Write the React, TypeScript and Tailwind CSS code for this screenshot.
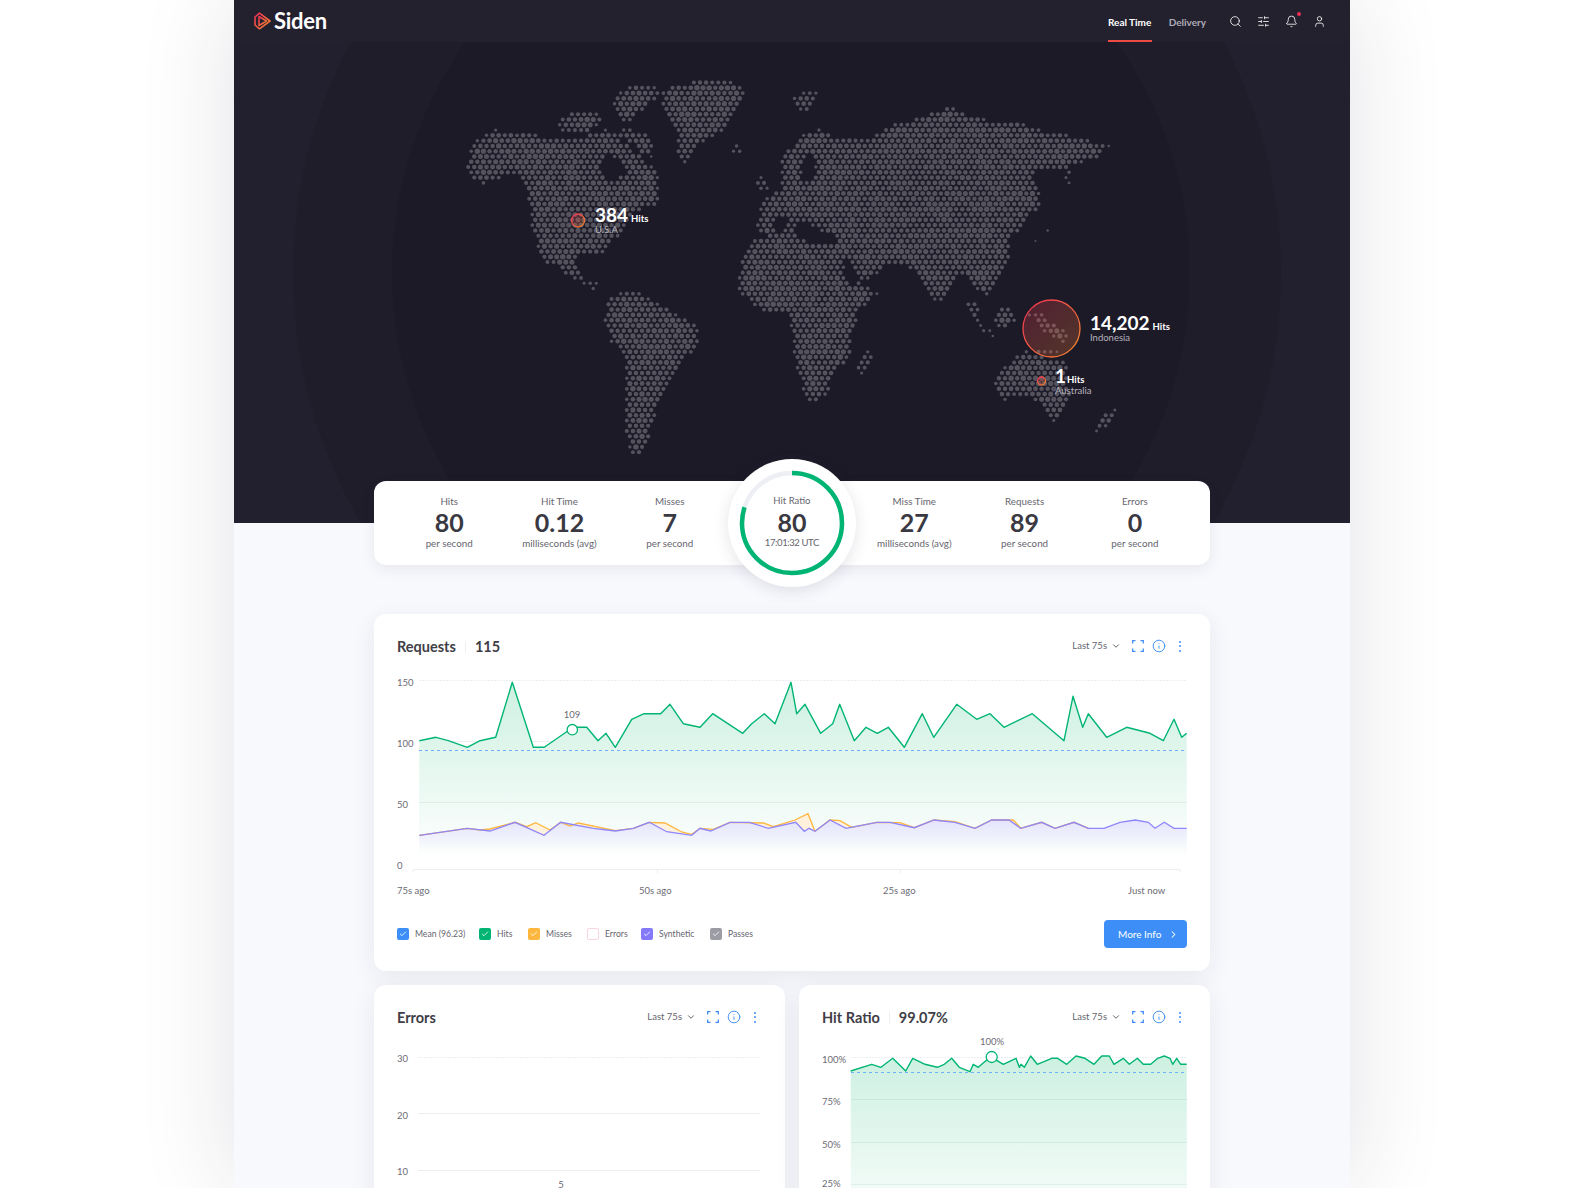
import { Bell, Check, ChevronDown, ChevronRight, Info, Search, SlidersHorizontal, User } from 'lucide-react';

type Pt = number[];

// outlines were read off zoomed crops, so each list keeps its own origin
const z = (ox: number, oy: number, pts: Pt[]) => pts.map(([x, y]) => [x / 3 + ox, y / 3 + oy]);
const z11 = (pts: Pt[]) => z(460, 70, pts);
const z12 = (pts: Pt[]) => z(720, 90, pts);
const z3 = (pts: Pt[]) => z(980, 280, pts);
const s = (pts: Pt[]) => pts.map(([x, y]) => [x * 1.0102, y * 1.0102]);

const land: Pt[][] = [
  // north america
  z11([[15, 285], [45, 215], [100, 178], [170, 195], [230, 195], [285, 200], [340, 205], [420, 190], [440, 175], [490, 200], [480, 225], [510, 225], [525, 250], [555, 265], [590, 310], [600, 370], [615, 395], [570, 410], [530, 430], [490, 490], [440, 530], [430, 550], [350, 560], [345, 590], [370, 620], [420, 640], [400, 662], [330, 625], [300, 590], [260, 578], [235, 530], [212, 470], [205, 380], [195, 330], [150, 305], [100, 335], [60, 340], [35, 325], [15, 305]]),
  // arctic islands
  z11([[280, 155], [320, 135], [375, 125], [420, 135], [420, 165], [380, 190], [330, 190], [285, 170]]),
  z11([[460, 80], [520, 45], [590, 50], [595, 80], [560, 110], [525, 140], [490, 165], [460, 120]]),
  z11([[480, 170], [550, 185], [590, 225], [570, 268], [540, 240], [505, 215], [470, 190]]),
  // greenland
  z11([[610, 60], [720, 30], [800, 25], [862, 65], [825, 130], [780, 190], [705, 235], [685, 288], [650, 270], [650, 200], [610, 125]]),
  z11([[812, 232], [838, 222], [862, 240], [838, 255]]),
  z11([[440, 690], [480, 660], [540, 680], [590, 710], [560, 720], [450, 720]]),
  // south america
  s([[601, 298], [620, 288], [640, 292], [660, 305], [692, 325], [690, 340], [672, 365], [660, 380], [650, 405], [642, 430], [638, 450], [625, 448], [618, 425], [620, 385], [620, 360], [603, 335], [598, 315]]),
  // africa
  z12([[50, 570], [70, 510], [100, 450], [170, 430], [215, 440], [300, 460], [360, 470], [380, 520], [410, 570], [450, 590], [475, 610], [420, 660], [400, 710], [390, 790], [340, 860], [320, 910], [280, 938], [255, 925], [240, 870], [220, 800], [215, 720], [205, 660], [130, 660], [90, 640], [55, 600]]),
  // eurasia
  z12([[105, 390], [130, 345], [130, 320], [185, 300], [180, 220], [240, 130], [300, 115], [350, 150], [430, 150], [500, 110], [580, 88], [620, 72], [690, 52], [760, 84], [880, 96], [980, 122], [1100, 150], [1172, 165], [1130, 200], [1040, 230], [1065, 285], [1035, 292], [1028, 235], [960, 240], [935, 250], [962, 290], [962, 340], [920, 395], [890, 430], [862, 420], [875, 480], [850, 540], [810, 620], [770, 600], [750, 570], [710, 550], [655, 640], [625, 625], [590, 545], [540, 520], [510, 520], [460, 560], [420, 590], [380, 510], [360, 470], [210, 440], [110, 430]]),
  z12([[102, 280], [130, 245], [150, 285], [135, 310]]),
  z12([[30, 178], [55, 160], [85, 178], [55, 195]]),
  z12([[200, 18], [260, 5], [305, 10], [250, 68]]),
  // islands of south east asia
  z12([[740, 640], [765, 635], [790, 700], [830, 745], [810, 740], [760, 695]]),
  z12([[810, 690], [850, 640], [890, 680], [855, 720], [825, 710]]),
  z12([[925, 672], [960, 670], [1045, 730], [1030, 755], [985, 740]]),
  z12([[945, 770], [980, 770], [1030, 785], [960, 795]]),
  z12([[925, 458], [985, 418], [985, 430], [935, 460]]),
  // madagascar
  z12([[405, 860], [418, 800], [450, 765], [460, 815], [432, 868]]),
  // australia
  z3([[45, 300], [80, 255], [130, 212], [210, 238], [272, 250], [262, 300], [272, 350], [240, 400], [228, 428], [200, 410], [180, 372], [130, 345], [70, 362], [50, 335]]),
  z3([[345, 455], [365, 415], [410, 365], [412, 405], [370, 445]]),
  z3([[0, 10], [30, 10], [28, 52], [5, 50]]),
  z3([[35, 118], [70, 72], [108, 118], [72, 150]]),
];

const water: Pt[][] = [
  z11([[420, 265], [455, 255], [495, 285], [495, 315], [455, 330], [422, 305]]),
  z12([[160, 390], [200, 385], [205, 420], [165, 425]]),
  z12([[225, 410], [260, 400], [300, 425], [362, 440], [360, 462], [300, 462], [240, 450]]),
  z12([[255, 190], [290, 210], [272, 270], [238, 272], [250, 220]]),
  z12([[380, 535], [410, 575], [400, 585], [372, 548]]),
];

const extra: Pt[] = [
  ...z11([[432, 590, 2.6], [468, 590, 1.4], [505, 612, 2.6], [523, 622, 1.6], [486, 622, 1.6], [395, 612, 3], [615, 398, 3], [42, 368, 2.4], [22, 378, 2], [8, 385, 1]]),
  ...z12([[890, 562, 3], [927, 605, 2.8], [910, 592, 1], [650, 637, 2.2], [630, 625, 2]]),
  ...z12([[445, 100, 1.4], [462, 88, 2.2], [482, 72, 2.4], [502, 60, 2.6], [612, 18, 2], [632, 28, 2.6], [650, 18, 1.2], [872, 60, 2.6], [890, 72, 2.6]]),
];

const inside = (x: number, y: number, poly: Pt[]) => {
  let hit = false;
  for (let i = 0, j = poly.length - 1; i < poly.length; j = i++) {
    const [xi, yi] = poly[i];
    const [xj, yj] = poly[j];
    if (yi > y !== yj > y && x < ((xj - xi) * (y - yi)) / (yj - yi) + xi) hit = !hit;
  }
  return hit;
};

const onLand = (x: number, y: number) => land.some((p) => inside(x, y, p)) && !water.some((p) => inside(x, y, p));

const makeDots = () => {
  const dots: Pt[] = [];
  const dx = 6.1;
  const dy = 5.28;
  for (let row = 0; row < 76; row++) {
    const y = 72 + row * dy;
    for (let col = 0; col < 112; col++) {
      const x = 456 + col * dx + (row % 2 ? dx / 2 : 0);
      if (!onLand(x, y)) continue;
      const near = [[dx, 0], [-dx, 0], [dx / 2, dy], [-dx / 2, dy], [dx / 2, -dy], [-dx / 2, -dy]].filter(([a, b]) => onLand(x + a, y + b)).length;
      const noise = Math.abs(Math.sin(x * 12.9898 + y * 78.233) * 43758.5453) % 1;
      dots.push([x, y, near === 6 ? 2.2 + noise * 0.55 : 1 + (near / 6) * 1.4 + noise * 0.4]);
    }
  }
  return [...dots, ...extra];
};

const dots = makeDots();

const line = (pts: Pt[]) => pts.map(([x, y]) => `${x.toFixed(1)},${y.toFixed(1)}`).join(' ');
const z5 = (pts: Pt[]) => z(380, 620, pts);
const z6 = (pts: Pt[]) => z(780, 620, pts);
const z10 = (pts: Pt[]) => z(790, 980, pts);

const hits = [
  ...z5([[118, 362], [168, 352], [205, 362], [262, 382], [300, 362], [347, 352], [397, 187], [460, 382], [493, 382], [560, 335], [577, 329], [590, 322], [620, 322], [654, 362], [678, 340], [706, 382], [755, 298], [792, 281], [842, 281], [870, 253], [910, 311], [960, 322], [998, 281], [1088, 340], [1115, 311], [1153, 281], [1185, 311]]),
  ...z6([[33, 187], [50, 281], [75, 253], [122, 340], [158, 311], [179, 253], [223, 362], [258, 322], [292, 340], [325, 322], [373, 382], [427, 281], [461, 352], [530, 253], [590, 298], [630, 281], [672, 322], [757, 281], [852, 362], [879, 229], [908, 322], [925, 281], [980, 352], [1040, 322], [1110, 340], [1150, 362], [1182, 298], [1205, 352], [1220, 340]]),
];
const synthetic = [
  ...z5([[118, 646], [262, 625], [330, 633], [405, 607], [492, 646], [542, 607], [640, 625], [706, 633], [760, 625], [808, 607], [860, 635], [935, 646], [960, 625], [992, 633], [1050, 607], [1108, 607], [1165, 625]]),
  ...z6([[47, 607], [73, 634], [87, 625], [105, 634], [150, 600], [198, 625], [290, 607], [330, 607], [403, 623], [462, 600], [525, 607], [585, 625], [635, 600], [687, 600], [722, 625], [785, 607], [825, 625], [882, 607], [925, 625], [972, 625], [1020, 607], [1066, 600], [1105, 607], [1125, 625], [1153, 607], [1182, 625], [1220, 625]]),
];
const misses = [
  ...z5([[118, 646], [262, 625], [300, 630], [330, 627], [405, 607], [440, 620], [467, 608], [510, 630], [542, 607], [570, 618], [595, 609], [706, 632], [760, 625], [808, 607], [855, 609], [905, 636], [935, 643], [960, 625], [1000, 628], [1050, 607], [1150, 609], [1180, 620]]),
  ...z6([[45, 600], [84, 581], [105, 634], [150, 600], [180, 602], [215, 622], [290, 607], [360, 608], [403, 623], [462, 600], [525, 605], [585, 625], [635, 600], [700, 600], [722, 625], [785, 607], [825, 625], [882, 607], [925, 625]]),
];
const missBand = [...misses, ...synthetic.filter(([x]) => x <= 1088.4).reverse()];
const ratio = z10([[182, 273], [245, 253], [273, 262], [308, 235], [347, 273], [368, 235], [405, 253], [442, 262], [463, 253], [485, 235], [508, 262], [540, 275], [550, 253], [565, 262], [590, 240], [605, 232], [640, 253], [678, 235], [688, 262], [693, 253], [703, 262], [722, 228], [742, 253], [785, 235], [803, 235], [830, 253], [858, 228], [885, 235], [912, 253], [935, 228], [958, 228], [972, 253], [1000, 235], [1018, 253], [1042, 235], [1060, 253], [1082, 253], [1103, 235], [1123, 228], [1140, 235], [1148, 253], [1160, 235], [1172, 253], [1190, 253]]);

const stats = [
  { label: 'Hits', value: '80', sub: 'per second' },
  { label: 'Hit Time', value: '0.12', sub: 'milliseconds (avg)' },
  { label: 'Misses', value: '7', sub: 'per second' },
];
const stats2 = [
  { label: 'Miss Time', value: '27', sub: 'milliseconds (avg)' },
  { label: 'Requests', value: '89', sub: 'per second' },
  { label: 'Errors', value: '0', sub: 'per second' },
];

const legend = [
  { name: 'Mean (96.23)', box: 'bg-[#3d8ff7]', w: 'w-[82px]' },
  { name: 'Hits', box: 'bg-[#00b574]', w: 'w-[49px]' },
  { name: 'Misses', box: 'bg-[#fdb73e]', w: 'w-[59px]' },
  { name: 'Errors', box: 'bg-white border border-[#fbd5de]', w: 'w-[54px]' },
  { name: 'Synthetic', box: 'bg-[#8479fb]', w: 'w-[69px]' },
  { name: 'Passes', box: 'bg-[#9c9ca4]', w: 'w-[60px]' },
];

const Stat = ({ label, value, sub }: { label: string; value: string; sub: string }) => (
  <div className="flex w-[110.5px] flex-col items-center pb-[3px]">
    <span className="text-[9.8px] leading-[14px] text-[#66656e]">{label}</span>
    <span className="text-[25px] font-bold leading-[28px] text-[#3a3942]">{value}</span>
    <span className="text-[9.8px] leading-[14px] text-[#66656e]">{sub}</span>
  </div>
);

const Expand = () => (
  <svg width="12" height="12" viewBox="0 0 12 12" fill="none" stroke="#3d8ff7" strokeWidth="1.3">
    <path d="M.7 3.5V.7h2.8M8.5.7h2.8v2.8M11.3 8.5v2.8H8.5M3.5 11.3H.7V8.5" />
  </svg>
);

const Controls = () => (
  <div className="flex items-center text-[9.5px] text-[#66656e]">
    <span>Last 75s</span>
    <ChevronDown size={10} strokeWidth={2} className="ml-[4px] text-[#44434c]" />
    <span className="ml-[11px]"><Expand /></span>
    <Info size={14} strokeWidth={1.6} className="ml-[8px] text-[#3d8ff7]" />
    <div className="ml-[13px] mr-[6px] flex flex-col gap-[2.5px]">
      <span className="h-[2px] w-[2px] rounded-full bg-[#3d8ff7]" />
      <span className="h-[2px] w-[2px] rounded-full bg-[#3d8ff7]" />
      <span className="h-[2px] w-[2px] rounded-full bg-[#3d8ff7]" />
    </div>
  </div>
);

const CardHeader = ({ title, value }: { title: string; value?: string }) => (
  <div className="flex h-[20px] items-center justify-between">
    <div className="mt-[2px] flex items-center text-[14.5px] font-bold leading-[20px] text-[#3f3e47]">
      <span>{title}</span>
      {value && <span className="mx-[9px] h-[12px] w-px bg-[#eeeff3]" />}
      {value && <span className="-mt-[1px]">{value}</span>}
    </div>
    <Controls />
  </div>
);

const Pin = ({ x, y, r, id }: { x: number; y: number; r: number; id: string }) => (
  <>
    <defs>
      <linearGradient id={id} x1="0" y1="0" x2="1" y2="1">
        <stop offset="0" stopColor="#ee2f55" />
        <stop offset="1" stopColor="#f58a2c" />
      </linearGradient>
    </defs>
    <circle cx={x} cy={y} r={r} fill={`url(#${id})`} fillOpacity="0.25" stroke={`url(#${id})`} strokeWidth="1.3" />
  </>
);

const MapLabel = ({ pos, value, gap, name }: { pos: string; value: string; gap: string; name: string }) => (
  <div className={`absolute ${pos} flex flex-col text-white`}>
    <div className={`flex items-baseline ${gap} leading-[11px]`}>
      <span className="text-[19px] font-bold">{value}</span>
      <span className="text-[9.5px] font-bold">Hits</span>
    </div>
    <span className="text-[9.5px] leading-[11px] text-[#b5b3bc]">{name}</span>
  </div>
);

const grid = 'stroke-[#eceef1]';
const axis = 'fill-[#6c6b74] text-[9.5px]';

export default function App() {
  return (
    <div className="h-[1188px] overflow-hidden bg-white font-['Lato',sans-serif]">
      <div className="mx-auto h-[1188px] w-[1116px] bg-[#f8f9fd] shadow-[0_0_90px_rgba(30,30,60,0.13)]">
        <header className="relative z-10 flex h-[42px] items-center bg-[#24212f] pl-[20px] pr-[24px]">
          <svg width="17" height="18" viewBox="0 0 17 18" fill="none" stroke="url(#logo)" strokeWidth="1.6" strokeLinejoin="round">
            <defs>
              <linearGradient id="logo" x1="0" y1="0" x2="1" y2="1">
                <stop offset="0" stopColor="#ee2f55" />
                <stop offset="1" stopColor="#f58a2c" />
              </linearGradient>
            </defs>
            <path d="M1 5 5.5 1.2 16 9 5.5 16.8 1 13Z" />
            <path d="M5 4.5 12.5 9 5 13.5Z" />
          </svg>
          <span className="-mt-[1px] ml-[3px] text-[22px] font-bold leading-none tracking-[-0.3px] text-white">Siden</span>
          <nav className="ml-auto flex h-full items-center text-[10px] font-bold">
            <span className="flex h-full w-[44px] items-center justify-center whitespace-nowrap border-b-[2.5px] border-[#ee4a45] pt-[4px] text-white">Real Time</span>
            <span className="ml-[17px] mt-[2px] text-[#aeacb6]">Delivery</span>
          </nav>
          <div className="ml-[23px] flex items-center gap-[15px] text-white">
            <Search size={13} strokeWidth={1.5} />
            <SlidersHorizontal size={13} strokeWidth={1.5} />
            <span className="relative">
              <Bell size={13} strokeWidth={1.5} />
              <span className="absolute right-[-3px] top-[-3px] h-[4px] w-[4px] rounded-full bg-[#ee2f55]" />
            </span>
            <User size={13} strokeWidth={1.5} />
          </div>
        </header>

        <section className="relative h-[481px] overflow-hidden bg-[#22202e]">
          <div className="absolute left-[59px] top-[-263px] h-[988px] w-[988px] rounded-full bg-[#201d2b]" />
          <div className="absolute left-[158px] top-[-168px] h-[798px] w-[798px] rounded-full bg-[#1d1a28]" />
          <svg className="absolute inset-0" width="1116" height="481" viewBox="234 42 1116 481">
            {dots.map(([x, y, r], i) => (
              <circle key={i} cx={x} cy={y} r={r} fill="#55535e" />
            ))}
            <Pin id="pin-a" x={578} y={220.5} r={6.5} />
            <Pin id="pin-b" x={1051.5} y={328.5} r={28.5} />
            <Pin id="pin-c" x={1041.5} y={381} r={4} />
          </svg>
          <MapLabel pos="left-[361px] top-[167px]" value="384" gap="gap-[3px]" name="U.S.A" />
          <MapLabel pos="left-[856px] top-[275px]" value="14,202" gap="gap-[3px]" name="Indonesia" />
          <MapLabel pos="left-[821px] top-[328px]" value="1" gap="gap-[1px]" name="Australia" />
        </section>

        <main className="relative px-[140px]">
          <div className="relative z-10 -mt-[42px] flex h-[84px] items-center rounded-[12px] bg-white px-[20px] shadow-[0_4px_14px_rgba(40,40,70,0.08)]">
            {stats.map((item) => (
              <Stat key={item.label} {...item} />
            ))}
            <div className="relative h-full w-[134.5px]">
              <div className="absolute left-[3px] top-[-22px] flex h-[128px] w-[128px] flex-col items-center justify-center rounded-full bg-white pb-[2px] shadow-[0_4px_16px_rgba(40,40,70,0.12)]">
                <svg className="absolute inset-0" width="128" height="128" viewBox="0 0 128 128">
                  <circle cx="64" cy="64" r="50" fill="none" stroke="#edeff4" strokeWidth="4.5" />
                  <circle cx="64" cy="64" r="50" fill="none" stroke="#00b574" strokeWidth="4.5" strokeDasharray="251.3 314.2" transform="rotate(-90 64 64)" />
                </svg>
                <span className="text-[9.5px] leading-[14px] text-[#66656e]">Hit Ratio</span>
                <span className="text-[25px] font-bold leading-[28px] text-[#3a3942]">80</span>
                <span className="text-[9.5px] leading-[14px] tracking-[-0.4px] text-[#66656e]">17:01:32 UTC</span>
              </div>
            </div>
            {stats2.map((item) => (
              <Stat key={item.label} {...item} />
            ))}
          </div>

          <div className="mt-[49px] h-[357px] rounded-[12px] bg-white px-[23px] pt-[22px] shadow-[0_6px_24px_rgba(40,40,70,0.08)]">
            <CardHeader title="Requests" value="115" />
            <svg className="mt-[16px] block" width="790" height="230" viewBox="397 672 790 230">
              <defs>
                <linearGradient id="g-green" x1="0" y1="680" x2="0" y2="862" gradientUnits="userSpaceOnUse">
                  <stop offset="0" stopColor="#cdf0e1" />
                  <stop offset="1" stopColor="#ffffff" />
                </linearGradient>
                <linearGradient id="g-purple" x1="0" y1="815" x2="0" y2="852" gradientUnits="userSpaceOnUse">
                  <stop offset="0" stopColor="#e3e0fd" />
                  <stop offset="1" stopColor="#e3e0fd" stopOpacity="0" />
                </linearGradient>
              </defs>
              <line x1="419" x2="1187" y1="680.5" y2="680.5" className={grid} strokeDasharray="2 1" />
              <line x1="419" x2="1187" y1="741.5" y2="741.5" className={grid} />
              <path d="M413 872v-2.5h767v2.5M657.5 869.5v4M900.5 869.5v4" fill="none" className={grid} />
              <polygon points={`419,862 ${line(hits)} 1187,862`} fill="url(#g-green)" />
              <line x1="419" x2="1187" y1="802.5" y2="802.5" stroke="#dfeee8" />
              <polygon points={line(missBand)} fill="#fff1dc" />
              <polygon points={`419,852 ${line(synthetic)} 1187,852`} fill="url(#g-purple)" />
              <polyline points={line(misses)} fill="none" stroke="#fdb73e" strokeWidth="1.3" />
              <polyline points={line(synthetic)} fill="none" stroke="#8f86fb" strokeWidth="1.3" />
              <polyline points={line(hits)} fill="none" stroke="#00b574" strokeWidth="1.4" strokeLinejoin="round" />
              <line x1="419" x2="1187" y1="750.5" y2="750.5" stroke="#6fb2fb" strokeDasharray="3 3" />
              <circle cx="572.3" cy="729.7" r="5.2" fill="#fff" stroke="#00b574" strokeWidth="1.3" />
              <text x="572" y="718" textAnchor="middle" className={axis}>109</text>
              <text x="397" y="686" className={axis}>150</text>
              <text x="397" y="747" className={axis}>100</text>
              <text x="397" y="808" className={axis}>50</text>
              <text x="397" y="869" className={axis}>0</text>
              <text x="397" y="894" className={axis}>75s ago</text>
              <text x="639" y="894" className={axis}>50s ago</text>
              <text x="883" y="894" className={axis}>25s ago</text>
              <text x="1128" y="894" className={axis}>Just now</text>
            </svg>
            <div className="mt-[18px] flex items-center">
              {legend.map((item) => (
                <div key={item.name} className={`flex ${item.w} items-center`}>
                  <span className={`flex h-[12px] w-[12px] items-center justify-center rounded-[2px] ${item.box}`}>
                    <Check size={8} strokeWidth={2.5} className="text-white" />
                  </span>
                  <span className="ml-[6px] whitespace-nowrap text-[8.6px] text-[#66656e]">{item.name}</span>
                </div>
              ))}
              <button className="ml-auto flex h-[28px] w-[83px] items-center rounded-[4px] bg-[#3d8ff7] pl-[14px] text-[10px] text-white">
                More Info
                <ChevronRight size={11} strokeWidth={2.2} className="ml-[7px]" />
              </button>
            </div>
          </div>

          <div className="mt-[14px] flex gap-[14px]">
            <div className="h-[300px] w-[411px] rounded-[12px] bg-white px-[23px] pt-[22px] shadow-[0_6px_24px_rgba(40,40,70,0.08)]">
              <CardHeader title="Errors" />
              <svg className="mt-[3px] block" width="365" height="170" viewBox="397 1030 365 170">
                <line x1="418" x2="760" y1="1057.5" y2="1057.5" className={grid} strokeDasharray="2 1" />
                <line x1="418" x2="760" y1="1113.5" y2="1113.5" className={grid} />
                <line x1="418" x2="760" y1="1170.5" y2="1170.5" className={grid} />
                <text x="397" y="1062" className={axis}>30</text>
                <text x="397" y="1119" className={axis}>20</text>
                <text x="397" y="1175" className={axis}>10</text>
                <text x="561" y="1188" textAnchor="middle" className={axis}>5</text>
              </svg>
            </div>
            <div className="h-[300px] w-[411px] rounded-[12px] bg-white px-[23px] pt-[22px] shadow-[0_6px_24px_rgba(40,40,70,0.08)]">
              <CardHeader title="Hit Ratio" value="99.07%" />
              <svg className="mt-[3px] block" width="365" height="170" viewBox="822 1030 365 170">
                <defs>
                  <linearGradient id="g-ratio" x1="0" y1="1057" x2="0" y2="1240" gradientUnits="userSpaceOnUse">
                    <stop offset="0" stopColor="#cdf0e1" />
                    <stop offset="1" stopColor="#ffffff" />
                  </linearGradient>
                </defs>
                <line x1="851" x2="1187" y1="1057.5" y2="1057.5" className={grid} strokeDasharray="2 1" />
                <polygon points={`851,1240 ${line(ratio)} 1187,1240`} fill="url(#g-ratio)" />
                <line x1="851" x2="1187" y1="1099.5" y2="1099.5" stroke="#b9dccd" strokeOpacity="0.5" />
                <line x1="851" x2="1187" y1="1142.5" y2="1142.5" stroke="#b9dccd" strokeOpacity="0.4" />
                <line x1="851" x2="1187" y1="1184.5" y2="1184.5" stroke="#b9dccd" strokeOpacity="0.3" />
                <polyline points={line(ratio)} fill="none" stroke="#00b574" strokeWidth="1.4" strokeLinejoin="round" />
                <line x1="851" x2="1187" y1="1072.5" y2="1072.5" stroke="#6fb2fb" strokeDasharray="3 3" />
                <circle cx="991.7" cy="1057" r="5.5" fill="#fff" stroke="#00b574" strokeWidth="1.3" />
                <text x="992" y="1045" textAnchor="middle" className={axis}>100%</text>
                <text x="822" y="1063" className={axis}>100%</text>
                <text x="822" y="1105" className={axis}>75%</text>
                <text x="822" y="1148" className={axis}>50%</text>
                <text x="822" y="1187" className={axis}>25%</text>
              </svg>
            </div>
          </div>
        </main>
      </div>
    </div>
  );
}
